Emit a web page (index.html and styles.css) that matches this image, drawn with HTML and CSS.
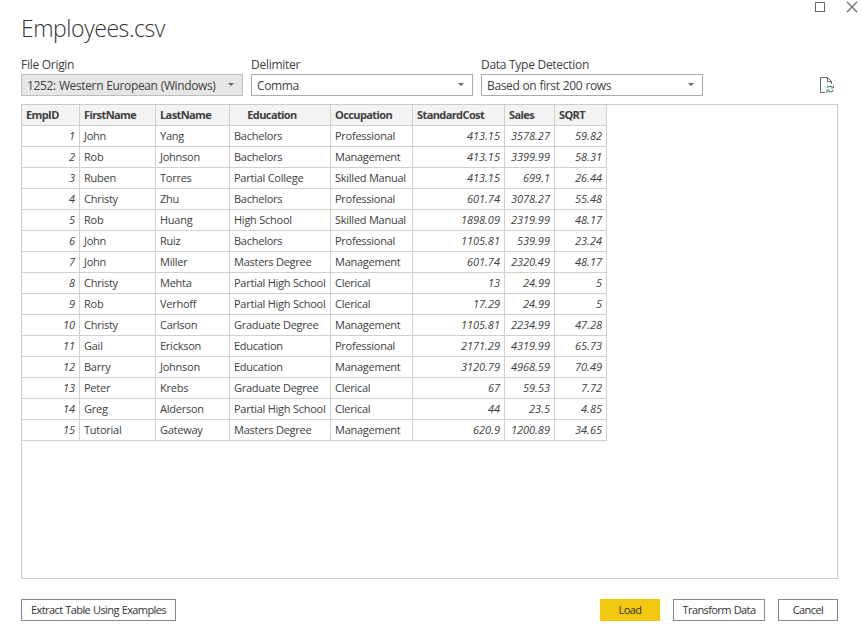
FILE: index.html
```html
<!DOCTYPE html>
<html lang="en">
<head>
<meta charset="utf-8">
<title>Employees.csv</title>
<link rel="stylesheet" href="styles.css">
</head>
<body>
<main class="dialog">
  <div class="window-controls">
    <svg width="12" height="14" viewBox="0 0 12 14"><rect x="1.5" y="2.5" width="9" height="9" fill="none" stroke="#666"/></svg>
    <svg width="12" height="14" viewBox="0 0 12 14"><path d="M1 2l10 10M11 2L1 12" fill="none" stroke="#666" stroke-width="1.2"/></svg>
  </div>
  <h1 class="title">Employees.csv</h1>
  <div class="options">
    <div class="field">
      <span class="label">File Origin</span>
      <div class="select disabled"><span>1252: Western European (Windows)</span><i class="arrow"></i></div>
    </div>
    <div class="field">
      <span class="label">Delimiter</span>
      <div class="select"><span>Comma</span><i class="arrow"></i></div>
    </div>
    <div class="field">
      <span class="label">Data Type Detection</span>
      <div class="select"><span>Based on first 200 rows</span><i class="arrow"></i></div>
    </div>
    <svg class="refresh" width="16" height="18" viewBox="0 0 16 18">
      <path d="M6 16.5H1.5V1.5H8.5L12.5 5.5V8M8.500 1.500V5.500H12.500" fill="none" stroke="#666"/>
      <path d="M8.300 12.200C8.800 9.800 12 9.400 13.600 11.600M14.200 13.800C13.700 16.200 10.500 16.600 8.900 14.400" fill="none" stroke="#55917f" stroke-width="1.200"/>
      <path d="M14.500 9v3H11.500M8 17v-3H11" fill="none" stroke="#55917f"/>
    </svg>
  </div>
  <section class="preview">
    <table class="grid">
      <colgroup><col class="c-id"><col class="c-first"><col class="c-last"><col class="c-edu"><col class="c-occ"><col class="c-cost"><col class="c-sales"><col class="c-sqrt"></colgroup>
      <thead><tr><th>EmpID</th><th>FirstName</th><th>LastName</th><th class="center">Education</th><th>Occupation</th><th>StandardCost</th><th>Sales</th><th>SQRT</th></tr></thead>
      <tbody>
        <tr><td class="num">1</td><td>John</td><td>Yang</td><td>Bachelors</td><td>Professional</td><td class="num">413.15</td><td class="num">3578.27</td><td class="num">59.82</td></tr>
        <tr><td class="num">2</td><td>Rob</td><td>Johnson</td><td>Bachelors</td><td>Management</td><td class="num">413.15</td><td class="num">3399.99</td><td class="num">58.31</td></tr>
        <tr><td class="num">3</td><td>Ruben</td><td>Torres</td><td>Partial College</td><td>Skilled Manual</td><td class="num">413.15</td><td class="num">699.1</td><td class="num">26.44</td></tr>
        <tr><td class="num">4</td><td>Christy</td><td>Zhu</td><td>Bachelors</td><td>Professional</td><td class="num">601.74</td><td class="num">3078.27</td><td class="num">55.48</td></tr>
        <tr><td class="num">5</td><td>Rob</td><td>Huang</td><td>High School</td><td>Skilled Manual</td><td class="num">1898.09</td><td class="num">2319.99</td><td class="num">48.17</td></tr>
        <tr><td class="num">6</td><td>John</td><td>Ruiz</td><td>Bachelors</td><td>Professional</td><td class="num">1105.81</td><td class="num">539.99</td><td class="num">23.24</td></tr>
        <tr><td class="num">7</td><td>John</td><td>Miller</td><td>Masters Degree</td><td>Management</td><td class="num">601.74</td><td class="num">2320.49</td><td class="num">48.17</td></tr>
        <tr><td class="num">8</td><td>Christy</td><td>Mehta</td><td>Partial High School</td><td>Clerical</td><td class="num">13</td><td class="num">24.99</td><td class="num">5</td></tr>
        <tr><td class="num">9</td><td>Rob</td><td>Verhoff</td><td>Partial High School</td><td>Clerical</td><td class="num">17.29</td><td class="num">24.99</td><td class="num">5</td></tr>
        <tr><td class="num">10</td><td>Christy</td><td>Carlson</td><td>Graduate Degree</td><td>Management</td><td class="num">1105.81</td><td class="num">2234.99</td><td class="num">47.28</td></tr>
        <tr><td class="num">11</td><td>Gail</td><td>Erickson</td><td>Education</td><td>Professional</td><td class="num">2171.29</td><td class="num">4319.99</td><td class="num">65.73</td></tr>
        <tr><td class="num">12</td><td>Barry</td><td>Johnson</td><td>Education</td><td>Management</td><td class="num">3120.79</td><td class="num">4968.59</td><td class="num">70.49</td></tr>
        <tr><td class="num">13</td><td>Peter</td><td>Krebs</td><td>Graduate Degree</td><td>Clerical</td><td class="num">67</td><td class="num">59.53</td><td class="num">7.72</td></tr>
        <tr><td class="num">14</td><td>Greg</td><td>Alderson</td><td>Partial High School</td><td>Clerical</td><td class="num">44</td><td class="num">23.5</td><td class="num">4.85</td></tr>
        <tr><td class="num">15</td><td>Tutorial</td><td>Gateway</td><td>Masters Degree</td><td>Management</td><td class="num">620.9</td><td class="num">1200.89</td><td class="num">34.65</td></tr>
      </tbody>
    </table>
  </section>
  <footer class="actions">
    <button class="btn extract">Extract Table Using Examples</button>
    <button class="btn load">Load</button>
    <button class="btn transform">Transform Data</button>
    <button class="btn cancel">Cancel</button>
  </footer>
</main>
</body>
</html>
```
FILE: styles.css
```css
* { box-sizing: border-box; }
body { margin: 0; background: #fff; color: #404040; font-family: "Open Sans", "Noto Sans", sans-serif; }
.dialog { width: 862px; height: 631px; padding: 0 24px 10px 21px; display: flex; flex-direction: column; overflow: hidden; }
.window-controls { height: 14px; display: flex; justify-content: flex-end; gap: 20px; margin-right: -20px; }
.title { margin: 0; height: 42px; line-height: 28px; font-size: 23px; font-weight: 300; letter-spacing: -0.45px; color: #333; }
.options { display: flex; gap: 8px; height: 48px; align-items: flex-start; }
.field { width: 222px; }
.label { display: block; height: 18px; line-height: 18px; font-size: 12px; letter-spacing: -0.28px; white-space: nowrap; }
.select { height: 22px; border: 1px solid #aaa; padding: 1px 8px 0 5px; display: flex; align-items: center; justify-content: space-between; font-size: 12px; line-height: 19px; letter-spacing: -0.37px; word-spacing: 0.4px; white-space: nowrap; }
.disabled { background: #e6e6e6; border-color: #bdbdbd; }
.arrow { border: 3px solid transparent; border-top-color: #666; border-bottom: 0; margin-top: -2px; }
.refresh { margin: 20px 3px 0 auto; }
.preview { height: 475px; border: 1px solid #ccc; }
.grid { width: 585px; table-layout: fixed; border-collapse: separate; border-spacing: 0; font-size: 11px; }
.c-id { width: 58px; } .c-first { width: 76px; } .c-last { width: 74px; } .c-edu { width: 101px; }
.c-occ { width: 82px; } .c-cost { width: 92px; } .c-sales { width: 50px; } .c-sqrt { width: 52px; }
.grid th, .grid td { height: 21px; padding: 0 4px; line-height: 20px; letter-spacing: -0.25px; border-right: 1px solid #d0d0d0; border-bottom: 1px solid #d0d0d0; white-space: nowrap; text-align: left; }
.grid th { background: #f3f3f3; font-weight: 700; letter-spacing: -0.6px; }
.grid .center { text-align: center; padding-right: 20px; }
.grid .num { text-align: right; font-style: italic; letter-spacing: 0; }
.actions { margin-top: 20px; display: flex; }
.btn { height: 22px; padding: 0; border: 1px solid #888; background: #fff; color: #333; font: 11px/20px "Open Sans", "Noto Sans", sans-serif; letter-spacing: -0.6px; word-spacing: 0.6px; white-space: nowrap; }
.extract { width: 155px; }
.load { width: 60px; margin-left: auto; background: #f2c811; border-color: #f2c811; }
.transform { width: 92px; margin-left: 13px; }
.cancel { width: 60px; margin-left: 13px; }
```
